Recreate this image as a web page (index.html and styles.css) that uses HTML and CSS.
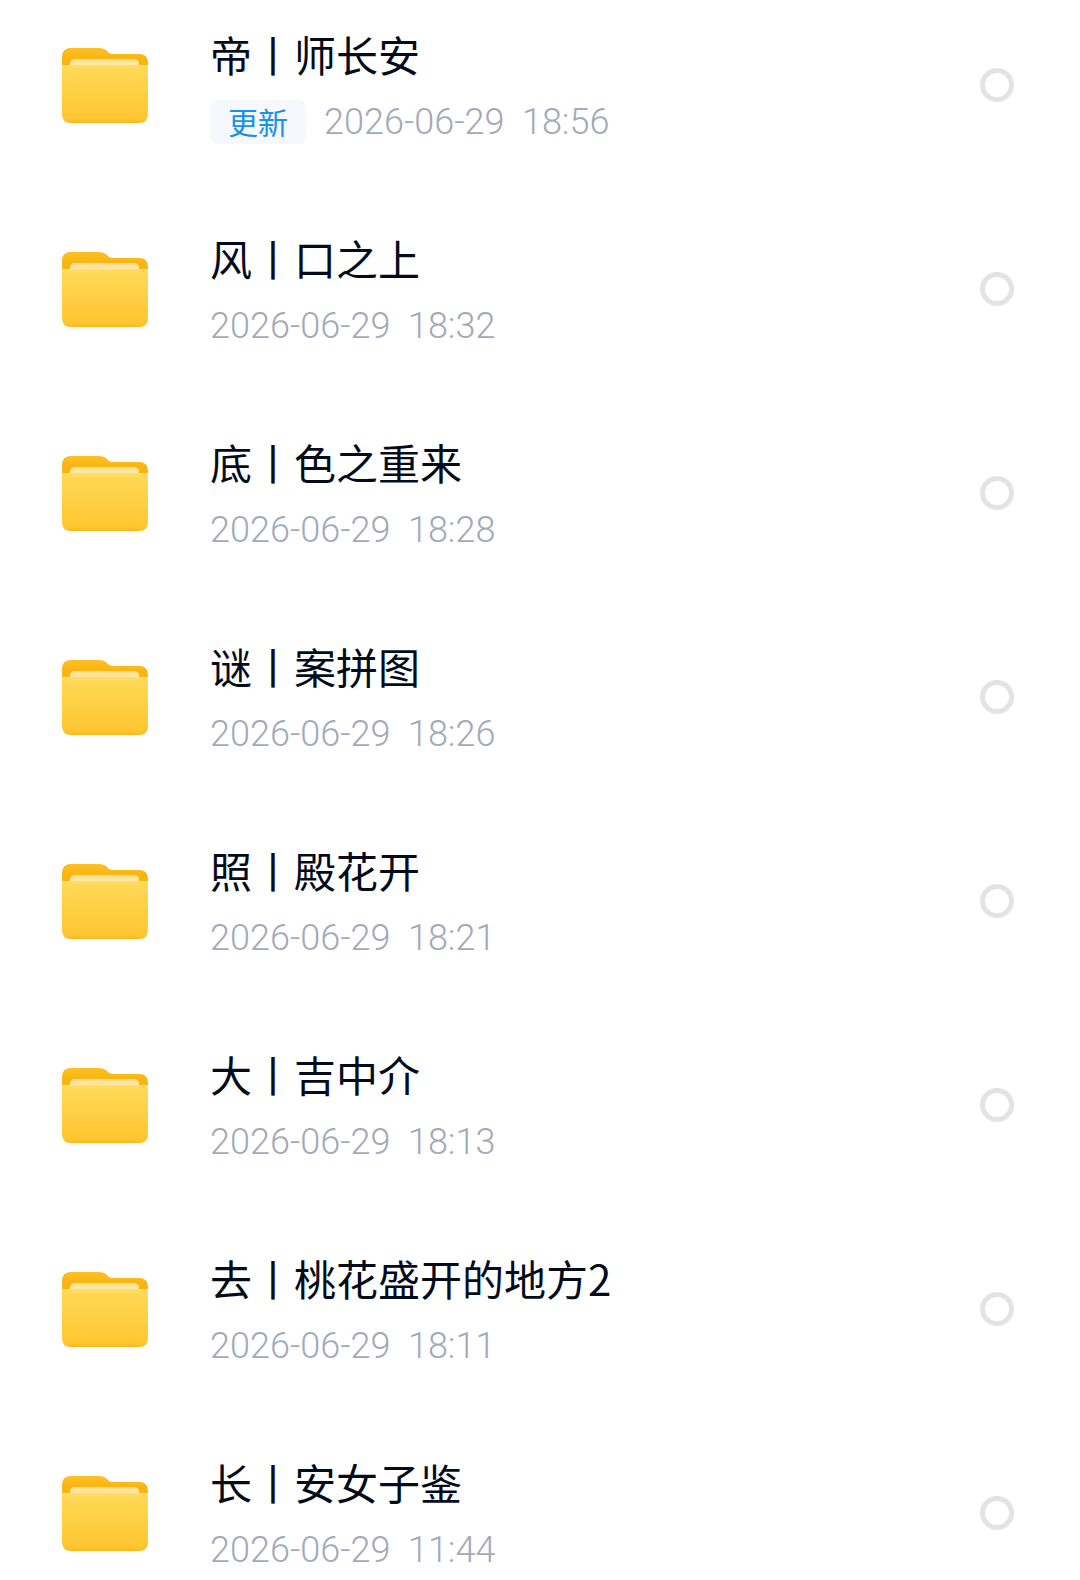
FILE: index.html
```html
<!DOCTYPE html>
<html lang="zh-CN">
<head>
    <meta charset="UTF-8">
    <meta name="viewport" content="width=device-width, initial-scale=1.0">
    <title>文件列表</title>
    <link rel="stylesheet" href="styles.css">
</head>
<body>
    <!-- Folder icon shared by every row -->
    <svg class="icon-defs" width="0" height="0" aria-hidden="true">
        <defs>
            <linearGradient id="folder-back" x1="0" y1="0" x2="0" y2="1">
                <stop offset="0" stop-color="#fcc025"/>
                <stop offset="0.3" stop-color="#fab40f"/>
                <stop offset="1" stop-color="#fbb917"/>
            </linearGradient>
            <linearGradient id="folder-paper" x1="0" y1="0" x2="0" y2="1">
                <stop offset="0" stop-color="#ffdf88"/>
                <stop offset="1" stop-color="#ffe9ae"/>
            </linearGradient>
            <linearGradient id="folder-front" x1="0" y1="0" x2="0" y2="1">
                <stop offset="0" stop-color="#ffdf6c"/>
                <stop offset="0.08" stop-color="#ffd854"/>
                <stop offset="0.92" stop-color="#ffc632"/>
                <stop offset="1" stop-color="#f9ba20"/>
            </linearGradient>
            <symbol id="folder" viewBox="0 0 86 76">
                <path d="M0 10Q0 1 9 1H37Q41 1 44 3L47 6Q49 7 52 7H77Q86 7 86 16V40H0Z" fill="url(#folder-back)"/>
                <path d="M8 19V17Q8 12 13 12H72Q77 12 77 17V19Z" fill="url(#folder-paper)"/>
                <path d="M0 18H86V67Q86 76 77 76H9Q0 76 0 67Z" fill="url(#folder-front)"/>
            </symbol>
        </defs>
    </svg>

    <ul class="file-list">
        <li>
            <label class="file-row">
                <svg class="file-icon" aria-hidden="true"><use href="#folder"/></svg>
                <span class="file-info">
                    <span class="file-name">帝丨师长安</span>
                    <span class="file-meta"><span class="badge">更新</span><time class="file-date">2026-06-29  18:56</time></span>
                </span>
                <input class="file-check" type="checkbox">
            </label>
        </li>
        <li>
            <label class="file-row">
                <svg class="file-icon" aria-hidden="true"><use href="#folder"/></svg>
                <span class="file-info">
                    <span class="file-name">风丨口之上</span>
                    <span class="file-meta"><time class="file-date">2026-06-29  18:32</time></span>
                </span>
                <input class="file-check" type="checkbox">
            </label>
        </li>
        <li>
            <label class="file-row">
                <svg class="file-icon" aria-hidden="true"><use href="#folder"/></svg>
                <span class="file-info">
                    <span class="file-name">底丨色之重来</span>
                    <span class="file-meta"><time class="file-date">2026-06-29  18:28</time></span>
                </span>
                <input class="file-check" type="checkbox">
            </label>
        </li>
        <li>
            <label class="file-row">
                <svg class="file-icon" aria-hidden="true"><use href="#folder"/></svg>
                <span class="file-info">
                    <span class="file-name">谜丨案拼图</span>
                    <span class="file-meta"><time class="file-date">2026-06-29  18:26</time></span>
                </span>
                <input class="file-check" type="checkbox">
            </label>
        </li>
        <li>
            <label class="file-row">
                <svg class="file-icon" aria-hidden="true"><use href="#folder"/></svg>
                <span class="file-info">
                    <span class="file-name">照丨殿花开</span>
                    <span class="file-meta"><time class="file-date">2026-06-29  18:21</time></span>
                </span>
                <input class="file-check" type="checkbox">
            </label>
        </li>
        <li>
            <label class="file-row">
                <svg class="file-icon" aria-hidden="true"><use href="#folder"/></svg>
                <span class="file-info">
                    <span class="file-name">大丨吉中介</span>
                    <span class="file-meta"><time class="file-date">2026-06-29  18:13</time></span>
                </span>
                <input class="file-check" type="checkbox">
            </label>
        </li>
        <li>
            <label class="file-row">
                <svg class="file-icon" aria-hidden="true"><use href="#folder"/></svg>
                <span class="file-info">
                    <span class="file-name">去丨桃花盛开的地方2</span>
                    <span class="file-meta"><time class="file-date">2026-06-29  18:11</time></span>
                </span>
                <input class="file-check" type="checkbox">
            </label>
        </li>
        <li>
            <label class="file-row">
                <svg class="file-icon" aria-hidden="true"><use href="#folder"/></svg>
                <span class="file-info">
                    <span class="file-name">长丨安女子鉴</span>
                    <span class="file-meta"><time class="file-date">2026-06-29  11:44</time></span>
                </span>
                <input class="file-check" type="checkbox">
            </label>
        </li>
    </ul>
</body>
</html>
```
FILE: styles.css
```css
* {
    margin: 0;
    padding: 0;
    box-sizing: border-box;
}

body {
    font-family: Roboto, "Noto Sans CJK SC", sans-serif;
    background-color: #fff;
    color: #040c1c;
}

.icon-defs {
    position: absolute;
}

.file-list {
    display: flex;
    flex-direction: column;
    gap: 86px;
    padding: 26px 66px 0 62px;
    list-style: none;
}

.file-row {
    display: flex;
    align-items: center;
    gap: 62px;
    cursor: pointer;
}

.file-icon {
    flex: none;
    width: 86px;
    height: 76px;
}

.file-info {
    display: flex;
    flex: 1;
    flex-direction: column;
    gap: 18px;
    min-width: 0;
}

.file-name {
    font-family: "Noto Sans CJK SC", sans-serif;
    font-size: 42px;
    line-height: 56px;
}

.file-meta {
    display: flex;
    align-items: center;
    gap: 18px;
}

.badge {
    padding: 4px 18px 0;
    border-radius: 8px;
    background-color: #f6f8fd;
    color: #1492ec;
    font-size: 30px;
    line-height: 40px;
}

.file-date {
    color: #a2a9b9;
    font-size: 36px;
    font-weight: 300;
    line-height: 44px;
    white-space: pre;
}

.file-check {
    flex: none;
    width: 34px;
    height: 34px;
    border: 5px solid #e3e3e3;
    border-radius: 50%;
    appearance: none;
    cursor: pointer;
}

.file-check:checked {
    border-color: #1492ec;
    background-color: #1492ec;
}
```
